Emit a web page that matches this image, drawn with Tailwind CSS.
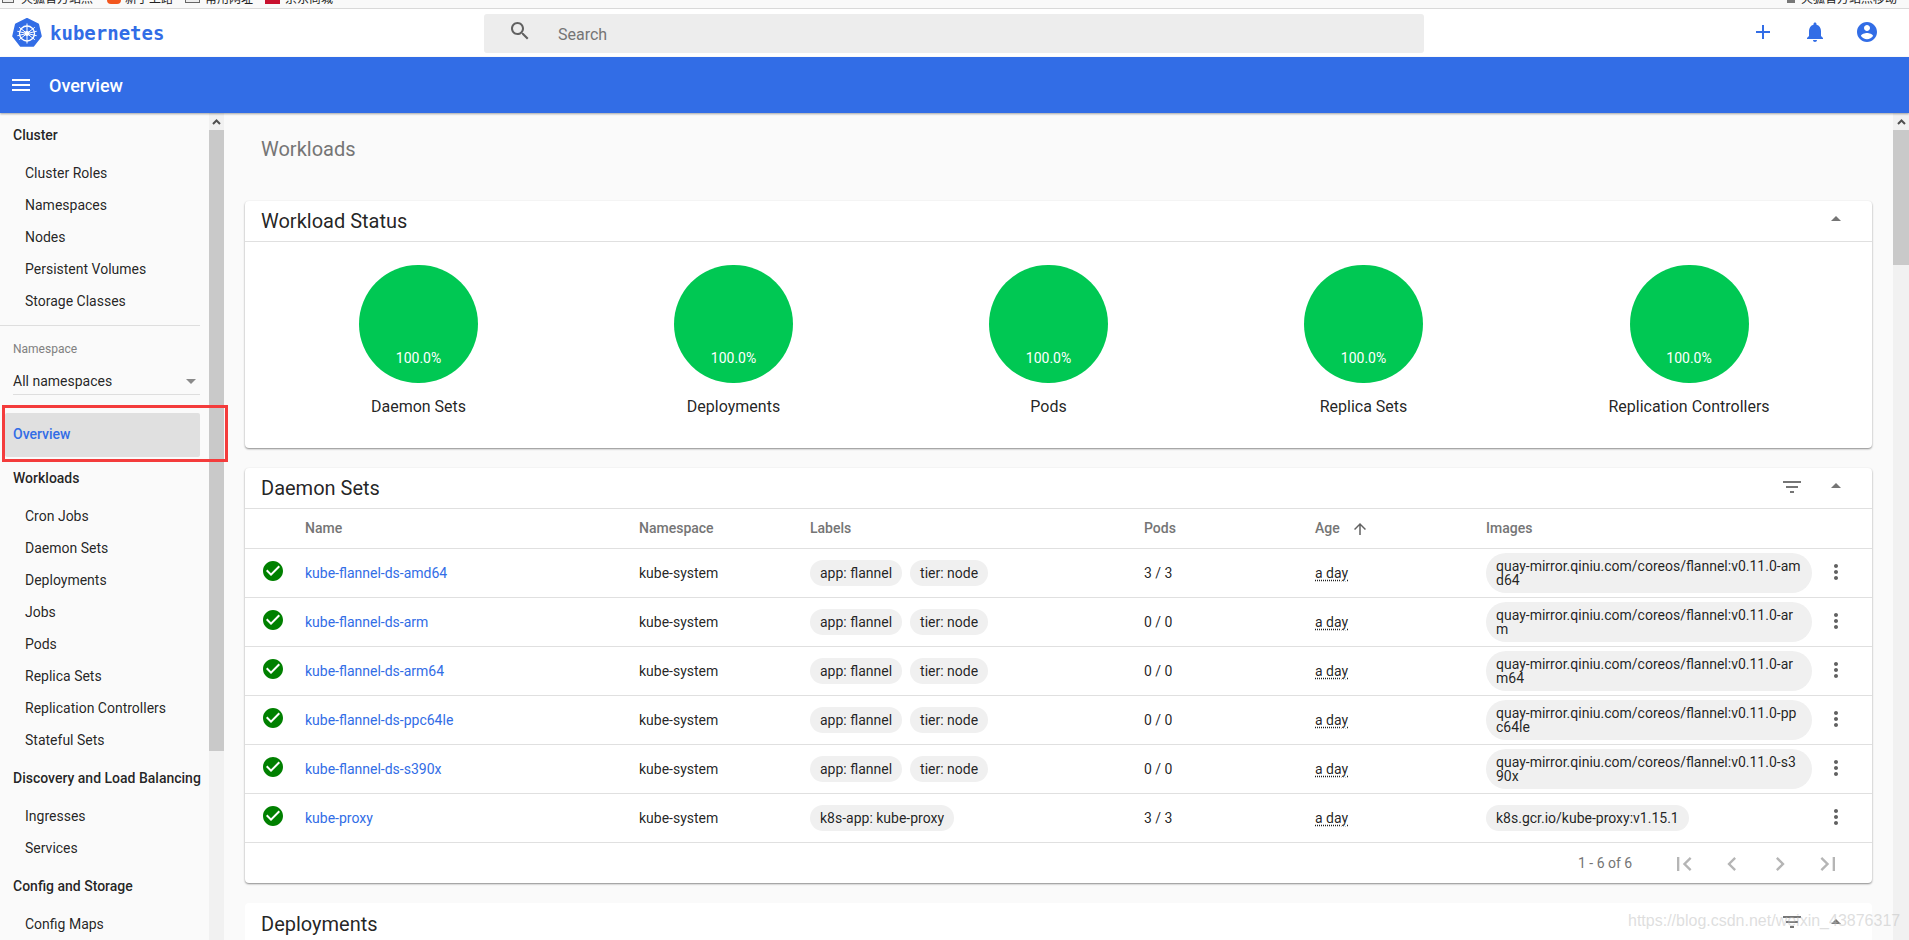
<!DOCTYPE html>
<html lang="en">

<head>
    <meta charset="UTF-8">
    <meta name="viewport" content="width=device-width, initial-scale=1.0">
    <script src="https://cdn.jsdelivr.net/npm/@tailwindcss/browser@4"></script>
    <title>Overview - Kubernetes Dashboard</title>
</head>

<body class="relative h-[940px] overflow-hidden flex flex-col bg-[#fafafa] text-[14px] text-black/87 font-[Roboto,sans-serif]">

    <!-- browser bookmarks strip, cut off by the screenshot -->
    <div class="h-[9px] shrink-0 flex items-start overflow-hidden bg-[#f9f9f9] border-b border-[#d9d9d9] text-[12px] leading-[15px] text-[#222] font-['Noto_Sans_CJK_SC',sans-serif]">
        <span class="ml-[2px] w-[12px] h-[3px] bg-[#eee] border border-[#666] border-t-0"></span>
        <span class="ml-[7px] -mt-[10px] w-[86px] whitespace-nowrap">火狐官方站点</span>
        <span class="w-[14px] h-[4px] bg-[#f2561d] rounded-b-full"></span>
        <span class="ml-[4px] -mt-[10px] w-[60px] whitespace-nowrap">新手上路</span>
        <span class="w-[15px] h-[3px] bg-[#eee] border border-[#666] border-t-0"></span>
        <span class="ml-[5px] -mt-[10px] w-[60px] whitespace-nowrap">常用网址</span>
        <span class="w-[15px] h-[4px] bg-[#c8102e]"></span>
        <span class="ml-[5px] -mt-[10px] whitespace-nowrap">京东商城</span>
        <span class="ml-auto mr-[12px] flex items-start gap-[6px]">
            <span class="w-[8px] h-[3px] bg-[#777]"></span>
            <span class="-mt-[10px] whitespace-nowrap">火狐官方站点移动</span>
        </span>
    </div>

    <!-- top toolbar -->
    <header class="h-[48px] shrink-0 flex items-center bg-white">
        <svg class="ml-[12px] w-[30px] h-[30px]" viewBox="0 0 30 30">
            <polygon points="15,1 26,6.3 28.8,18.2 21.2,27.8 8.8,27.8 1.2,18.2 4,6.3" fill="#326de6" stroke="#326de6" stroke-width="2" stroke-linejoin="round" />
            <g fill="none" stroke="#fff" stroke-width="1.3">
                <circle cx="15" cy="15.5" r="7.5" />
                <path d="M15 5.5V25.5M7.2 9.3L22.8 21.7M22.8 9.3L7.2 21.7M5.3 17.7L24.7 13.3M24.7 17.7L5.3 13.3" stroke-width="1" />
                <circle cx="15" cy="15.5" r="1.8" fill="#fff" />
            </g>
        </svg>
        <span class="ml-[8px] w-[114px] text-[19px] font-bold text-[#326de6] font-['DejaVu_Sans_Mono',monospace]">kubernetes</span>
        <div class="ml-[320px] mt-[1px] w-[940px] h-[39px] flex items-center bg-[#ededed] rounded-[3px]">
            <svg class="ml-[24px] w-[24px] h-[24px] -mt-[6px] fill-[#616161]" viewBox="0 0 24 24"><path d="M15.5 14h-.79l-.28-.27C15.41 12.59 16 11.11 16 9.5 16 5.91 13.09 3 9.5 3S3 5.91 3 9.5 5.91 16 9.5 16c1.61 0 3.09-.59 4.23-1.57l.27.28v.79l5 4.99L20.49 19l-4.99-5zm-6 0C7.01 14 5 11.99 5 9.5S7.01 5 9.5 5 14 7.01 14 9.5 11.99 14 9.5 14z" /></svg>
            <span class="ml-[26px] mt-[2px] text-[16px] text-[#757575]">Search</span>
        </div>
        <div class="ml-auto mr-[30px] flex items-center gap-[28px] -mt-[2px] fill-[#326de6]">
            <svg class="w-[24px] h-[24px]" viewBox="0 0 24 24"><path d="M19 13h-6v6h-2v-6H5v-2h6V5h2v6h6v2z" /></svg>
            <svg class="w-[24px] h-[24px]" viewBox="0 0 24 24"><path d="M12 22c1.1 0 2-.9 2-2h-4c0 1.1.89 2 2 2zm6-6v-5c0-3.07-1.64-5.64-4.5-6.32V4c0-.83-.67-1.5-1.5-1.5s-1.5.67-1.5 1.5v.68C7.63 5.36 6 7.92 6 11v5l-2 2v1h16v-1l-2-2z" /></svg>
            <svg class="w-[24px] h-[24px]" viewBox="0 0 24 24"><path d="M12 2C6.48 2 2 6.48 2 12s4.48 10 10 10 10-4.48 10-10S17.52 2 12 2zm0 3c1.66 0 3 1.34 3 3s-1.34 3-3 3-3-1.34-3-3 1.34-3 3-3zm0 14.2c-2.5 0-4.71-1.28-6-3.22.03-1.99 4-3.08 6-3.08 1.99 0 5.97 1.09 6 3.08-1.29 1.94-3.5 3.22-6 3.22z" /></svg>
        </div>
    </header>

    <!-- blue title bar -->
    <div class="relative z-10 h-[56px] shrink-0 flex items-center bg-[#326de6] text-white shadow-[0_1px_2px_rgba(0,0,0,0.35)]">
        <svg class="ml-[9px] w-[24px] h-[24px] fill-white" viewBox="0 0 24 24"><path d="M3 18h18v-2H3v2zm0-5h18v-2H3v2zm0-7v2h18V6H3z" /></svg>
        <span class="ml-[16px] text-[18px] font-medium">Overview</span>
    </div>

    <div class="flex flex-1 min-h-0">
        <!-- sidebar -->
        <nav class="w-[209px] shrink-0 overflow-hidden">
            <div class="w-[200px]">
                <div class="h-8 mt-[6px] mb-[6px] pl-[13px] flex items-center font-medium">Cluster</div>
                <div class="h-8 pl-[25px] flex items-center">Cluster Roles</div>
                <div class="h-8 pl-[25px] flex items-center">Namespaces</div>
                <div class="h-8 pl-[25px] flex items-center">Nodes</div>
                <div class="h-8 pl-[25px] flex items-center">Persistent Volumes</div>
                <div class="h-8 pl-[25px] flex items-center">Storage Classes</div>
                <div class="mt-[8px] border-t border-[#dedede]"></div>

                <div class="ml-[13px] mt-[16px] text-[12px] leading-[15px] text-[#808080]">Namespace</div>
                <div class="ml-[13px] h-[28px] mt-[10px] pt-[2px] flex items-center justify-between border-b border-[#dedede]">
                    <span>All namespaces</span>
                    <span class="mr-[4px] w-0 h-0 border-x-[5px] border-x-transparent border-t-[5px] border-t-[#8a8a8a]"></span>
                </div>

                <div class="ml-[5px] mt-[18px] h-[44px] pl-[8px] pb-[2px] flex items-center rounded-[2px] bg-[#e0e0e0] font-medium text-[#326de6]">Overview</div>

                <div class="h-8 mt-[5px] mb-[6px] pl-[13px] flex items-center font-medium">Workloads</div>
                <div class="h-8 pl-[25px] flex items-center">Cron Jobs</div>
                <div class="h-8 pl-[25px] flex items-center">Daemon Sets</div>
                <div class="h-8 pl-[25px] flex items-center">Deployments</div>
                <div class="h-8 pl-[25px] flex items-center">Jobs</div>
                <div class="h-8 pl-[25px] flex items-center">Pods</div>
                <div class="h-8 pl-[25px] flex items-center">Replica Sets</div>
                <div class="h-8 pl-[25px] flex items-center">Replication Controllers</div>
                <div class="h-8 pl-[25px] flex items-center">Stateful Sets</div>

                <div class="h-8 mt-[6px] mb-[6px] pl-[13px] flex items-center font-medium whitespace-nowrap">Discovery and Load Balancing</div>
                <div class="h-8 pl-[25px] flex items-center">Ingresses</div>
                <div class="h-8 pl-[25px] flex items-center">Services</div>

                <div class="h-8 mt-[6px] mb-[6px] pl-[13px] flex items-center font-medium">Config and Storage</div>
                <div class="h-8 pl-[25px] flex items-center">Config Maps</div>
            </div>
        </nav>

        <!-- sidebar scrollbar -->
        <div class="w-[15px] shrink-0 flex flex-col bg-[#f1f1f1]">
            <div class="h-[17px] flex items-center justify-center">
                <svg class="w-[9px] h-[6px]" viewBox="0 0 9 6"><path d="M1 5L4.5 1.5L8 5" fill="none" stroke="#505050" stroke-width="2" /></svg>
            </div>
            <div class="h-[621px] bg-[#c9c9c9]"></div>
        </div>

        <!-- main content -->
        <main class="flex-1 min-w-0 overflow-hidden px-[21px]">
            <h1 class="mt-[22px] mb-[38px] pl-4 text-[20px] leading-[28px] text-[#757575]">Workloads</h1>

            <!-- workload status -->
            <section class="h-[247px] bg-white rounded-[4px] shadow-[0_1px_2px_rgba(0,0,0,0.45)]">
                <div class="h-[41px] flex items-center justify-between border-b border-[#e0e0e0]">
                    <h2 class="pl-4 text-[20px]">Workload Status</h2>
                    <svg class="mr-[24px] -mt-[4px] w-[24px] h-[24px] fill-[#757575]" viewBox="0 0 24 24"><path d="M7 14l5-5 5 5z" /></svg>
                </div>
                <div id="estados" class="flex pl-[16px] pt-[23px]"></div>
            </section>

            <!-- daemon sets -->
            <section class="mt-[20px] bg-white rounded-[4px] shadow-[0_1px_2px_rgba(0,0,0,0.45)]">
                <div class="h-[41px] flex items-center border-b border-[#e0e0e0]">
                    <h2 class="pl-4 text-[20px]">Daemon Sets</h2>
                    <svg class="ml-auto -mt-[3px] w-[24px] h-[24px] fill-[#757575]" viewBox="0 0 24 24"><path d="M10 18h4v-2h-4v2zM3 6v2h18V6H3zm3 7h12v-2H6v2z" /></svg>
                    <svg class="ml-[20px] mr-[24px] -mt-[4px] w-[24px] h-[24px] fill-[#757575]" viewBox="0 0 24 24"><path d="M7 14l5-5 5 5z" /></svg>
                </div>
                <div class="h-[40px] grid grid-cols-[60px_334px_171px_334px_171px_171px_1fr] items-center border-b border-[#e0e0e0] font-medium text-[#757575]">
                    <span></span>
                    <span>Name</span>
                    <span>Namespace</span>
                    <span>Labels</span>
                    <span>Pods</span>
                    <span class="flex items-center">Age
                        <svg class="ml-[11px] w-[18px] h-[18px] fill-[#616161]" viewBox="0 0 24 24"><path d="M4 12l1.41 1.41L11 7.83V20h2V7.83l5.58 5.59L20 12l-8-8-8 8z" /></svg>
                    </span>
                    <span>Images</span>
                </div>
                <div id="filas"></div>
                <div class="h-[40px] flex items-center text-[#757575]">
                    <span class="ml-[1333px] w-[88px]">1 - 6 of 6</span>
                    <div class="ml-[4px] mt-[1px] flex gap-[20px] fill-[#b5b5b5]">
                        <svg class="w-[28px] h-[28px]" viewBox="0 0 24 24"><path d="M18.41 16.59L13.82 12l4.59-4.59L17 6l-6 6 6 6zM6 6h2v12H6z" /></svg>
                        <svg class="w-[28px] h-[28px]" viewBox="0 0 24 24"><path d="M15.41 7.41L14 6l-6 6 6 6 1.41-1.41L10.83 12z" /></svg>
                        <svg class="w-[28px] h-[28px]" viewBox="0 0 24 24"><path d="M10 6L8.59 7.41 13.17 12l-4.58 4.59L10 18l6-6z" /></svg>
                        <svg class="w-[28px] h-[28px]" viewBox="0 0 24 24"><path d="M5.59 7.41L10.18 12l-4.59 4.59L7 18l6-6-6-6zM16 6h2v12h-2z" /></svg>
                    </div>
                </div>
            </section>

            <!-- deployments, cut off by the window -->
            <section class="mt-[20px] h-[80px] bg-white rounded-[4px]">
                <div class="h-[41px] flex items-center">
                    <h2 class="pl-4 text-[20px]">Deployments</h2>
                    <svg class="ml-auto -mt-[3px] w-[24px] h-[24px] fill-[#757575]" viewBox="0 0 24 24"><path d="M10 18h4v-2h-4v2zM3 6v2h18V6H3zm3 7h12v-2H6v2z" /></svg>
                    <svg class="ml-[20px] mr-[24px] -mt-[4px] w-[24px] h-[24px] fill-[#757575]" viewBox="0 0 24 24"><path d="M7 14l5-5 5 5z" /></svg>
                </div>
            </section>
        </main>

        <!-- main scrollbar -->
        <div class="w-[16px] shrink-0 flex flex-col bg-[#f1f1f1]">
            <div class="h-[17px] flex items-center justify-center">
                <svg class="w-[9px] h-[6px]" viewBox="0 0 9 6"><path d="M1 5L4.5 1.5L8 5" fill="none" stroke="#505050" stroke-width="2" /></svg>
            </div>
            <div class="h-[135px] bg-[#c9c9c9]"></div>
        </div>
    </div>

    <!-- red annotation box drawn over the screenshot -->
    <div class="absolute left-[2px] top-[405px] w-[226px] h-[57px] border-[3px] border-[#f43c3c]"></div>

    <!-- csdn watermark -->
    <div class="absolute left-[1628px] top-[910px] text-[16px] leading-[22px] whitespace-nowrap text-[#bdbdbd]/50 font-['Liberation_Sans',sans-serif]">https://blog.csdn.net/weixin_43876317</div>

    <script>
        const estados = [
            { nombre: "Daemon Sets", ancho: "w-[315px]" },
            { nombre: "Deployments", ancho: "w-[315px]" },
            { nombre: "Pods", ancho: "w-[315px]" },
            { nombre: "Replica Sets", ancho: "w-[315px]" },
            { nombre: "Replication Controllers", ancho: "w-[336px]" }
        ];

        const daemonSets = [
            { nombre: "kube-flannel-ds-amd64", labels: ["app: flannel", "tier: node"], pods: "3 / 3", imagen: "quay-mirror.qiniu.com/coreos/flannel:v0.11.0-amd64" },
            { nombre: "kube-flannel-ds-arm", labels: ["app: flannel", "tier: node"], pods: "0 / 0", imagen: "quay-mirror.qiniu.com/coreos/flannel:v0.11.0-arm" },
            { nombre: "kube-flannel-ds-arm64", labels: ["app: flannel", "tier: node"], pods: "0 / 0", imagen: "quay-mirror.qiniu.com/coreos/flannel:v0.11.0-arm64" },
            { nombre: "kube-flannel-ds-ppc64le", labels: ["app: flannel", "tier: node"], pods: "0 / 0", imagen: "quay-mirror.qiniu.com/coreos/flannel:v0.11.0-ppc64le" },
            { nombre: "kube-flannel-ds-s390x", labels: ["app: flannel", "tier: node"], pods: "0 / 0", imagen: "quay-mirror.qiniu.com/coreos/flannel:v0.11.0-s390x" },
            { nombre: "kube-proxy", labels: ["k8s-app: kube-proxy"], pods: "3 / 3", imagen: "k8s.gcr.io/kube-proxy:v1.15.1" }
        ];

        document.getElementById("estados").innerHTML = estados.map(estado => `
            <div class="${estado.ancho} flex flex-col items-center">
                <div class="w-[119px] h-[118px] rounded-full bg-[#00c853] flex items-end justify-center pb-[16px] text-white leading-[17px]">100.0%</div>
                <div class="mt-[13px] text-[16px] leading-[22px]">${estado.nombre}</div>
            </div>
        `).join("");

        document.getElementById("filas").innerHTML = daemonSets.map(ds => `
            <div class="h-[49px] grid grid-cols-[60px_334px_171px_334px_171px_171px_326px_1fr] items-center border-b border-[#e0e0e0]">
                <svg class="ml-[16px] -mt-[4px] w-[24px] h-[24px] fill-[#008000]" viewBox="0 0 24 24"><path d="M12 2C6.48 2 2 6.48 2 12s4.48 10 10 10 10-4.48 10-10S17.52 2 12 2zm-2 15l-5-5 1.41-1.41L10 14.17l7.59-7.59L19 8l-9 9z" /></svg>
                <a class="text-[#326de6]">${ds.nombre}</a>
                <span>kube-system</span>
                <div class="flex gap-[8px]">
                    ${ds.labels.map(label => `<span class="h-[26px] px-[10px] flex items-center rounded-full bg-[#f0f0f0]">${label}</span>`).join("")}
                </div>
                <span>${ds.pods}</span>
                <span><span class="underline decoration-dotted underline-offset-2">a day</span></span>
                <div class="flex"><span class="px-[10px] py-[6px] rounded-[20px] bg-[#f0f0f0] leading-[14px] break-all">${ds.imagen}</span></div>
                <svg class="ml-[12px] -mt-[2px] w-[24px] h-[24px] fill-[#616161]" viewBox="0 0 24 24"><path d="M12 8c1.1 0 2-.9 2-2s-.9-2-2-2-2 .9-2 2 .9 2 2 2zm0 2c-1.1 0-2 .9-2 2s.9 2 2 2 2-.9 2-2-.9-2-2-2zm0 6c-1.1 0-2 .9-2 2s.9 2 2 2 2-.9 2-2-.9-2-2-2z" /></svg>
            </div>
        `).join("");
    </script>
</body>

</html>
